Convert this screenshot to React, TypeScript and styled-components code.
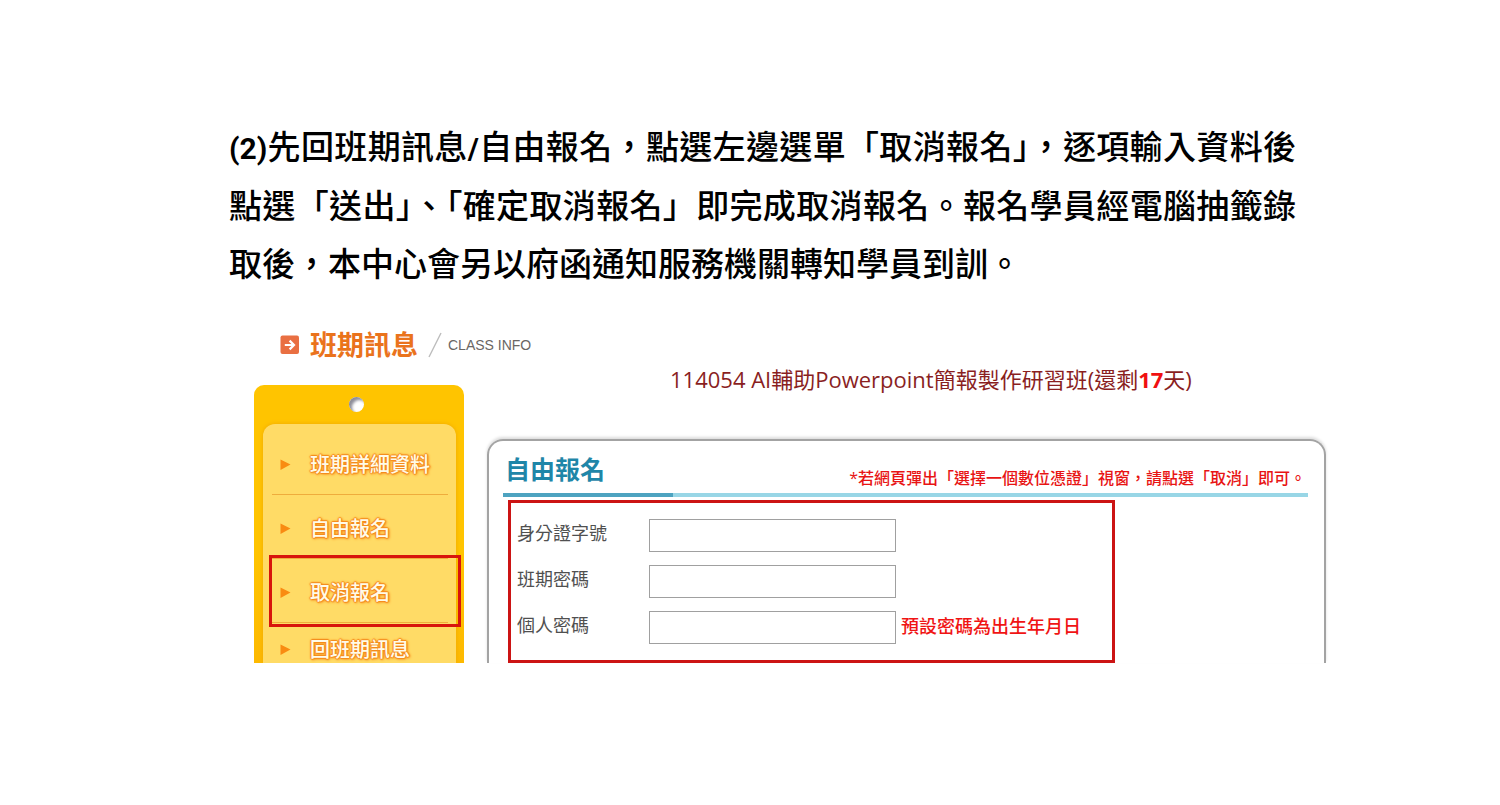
import React from "react";
import styled, { createGlobalStyle } from "styled-components";

const GlobalStyle = createGlobalStyle`
  * { box-sizing: border-box; }
  body {
    margin: 0;
    background: #fff;
    color: #000;
    font-family: "Open Sans", "Noto Sans CJK TC", sans-serif;
  }
`;

const Page = styled.main`
  padding: 119px 174px 40px 229px;
`;

const Instruction = styled.p`
  margin: 0;
  padding-right: 30px;
  font-family: Roboto, "Noto Sans CJK TC", sans-serif;
  font-size: 33px;
  font-weight: 500;
  line-height: 58px;
`;

const Line = styled.span<{ $last?: boolean }>`
  display: block;
  text-align: justify;
  text-align-last: ${(p) => (p.$last ? "left" : "justify")};
`;

const StepLabel = styled.span`
  font-weight: 700;
  font-size: 30px;
`;

const Site = styled.section`
  margin: 37px 0 0 25px;
`;

const SiteHeader = styled.header`
  display: flex;
  align-items: center;
  height: 28px;
  padding-left: 26px;
`;

const SiteTitle = styled.h1`
  margin: 0 10px;
  font-size: 27px;
  font-weight: 700;
  line-height: 28px;
  color: #ea731c;
`;

const SiteSubtitle = styled.span`
  margin-left: 6px;
  font-family: "Liberation Sans", sans-serif;
  font-size: 14px;
  line-height: 20px;
  color: #6a6664;
`;

const Columns = styled.div`
  display: flex;
  gap: 23px;
`;

const Sidebar = styled.nav`
  display: flex;
  flex-direction: column;
  flex: 0 0 210px;
  margin-top: 26px;
  padding: 12px 8px 0 9px;
  overflow: hidden;
  border-radius: 10px 10px 0 0;
  background: linear-gradient(#ffc400 60%, #fdb900);
`;

const Hole = styled.span`
  align-self: center;
  width: 15px;
  height: 15px;
  margin: 0 6px 12px 0;
  border-radius: 50%;
  background: #fff;
  box-shadow: inset 3px 3px 3px #8d8d99;
`;

const Menu = styled.ul`
  flex: 1;
  margin: 0;
  padding: 7px 8px 0 9px;
  list-style: none;
  border-radius: 12px 12px 0 0;
  background: #ffdb66;
  box-shadow: 0 0 4px #f0a800;
`;

const MenuItem = styled.li<{ $last?: boolean }>`
  position: relative;
  padding: ${(p) => (p.$last ? "15px 0 1px" : "22px 0 17px")};
  border-bottom: ${(p) => (p.$last ? "none" : "1px solid #efac3c")};
`;

const MenuLink = styled.a`
  display: flex;
  align-items: center;
  gap: 19px;
  padding-left: 8px;
  font-size: 20px;
  font-weight: 500;
  line-height: 24px;
  color: #fffbe8;
  text-decoration: none;
  text-shadow: 1px 0 1px #f58a1c, -1px 0 1px #f58a1c, 0 1px 1px #f58a1c,
    0 -1px 1px #f58a1c, 1px 1px 3px #f58a1c, 0 0 3px #f58a1c;
`;

const MenuHighlight = styled.span`
  position: absolute;
  inset: -4px -13px -5px -3px;
  border: 3px solid #d8140c;
  pointer-events: none;
`;

const Content = styled.div`
  display: flex;
  flex-direction: column;
  flex: 1;
  min-width: 0;
`;

const CourseTitle = styled.h2`
  margin: 5px 0 45px;
  padding-left: 183px;
  font-size: 22px;
  font-weight: 400;
  line-height: 30px;
  color: #8a1f1f;
`;

const DaysLeft = styled.strong`
  font-weight: 700;
  color: #f01010;
`;

const Panel = styled.div`
  flex: 1;
  padding: 14px 16px 0 14px;
  border: 2px solid #a3a3a3;
  border-bottom: none;
  border-radius: 16px 16px 0 0;
  box-shadow: 0 -2px 3px #ddd;
`;

const PanelHeader = styled.div`
  display: flex;
  justify-content: space-between;
  align-items: flex-end;
  height: 38px;
  padding: 0 2px 1px;
`;

const PanelTitle = styled.h3`
  align-self: flex-start;
  margin: 0;
  font-size: 25px;
  font-weight: 700;
  line-height: 28px;
  color: #1f86a8;
`;

const Notice = styled.p`
  margin: 0;
  font-size: 16px;
  font-weight: 500;
  line-height: 28px;
  color: #e81414;
`;

const Rule = styled.div`
  height: 4px;
  background: linear-gradient(to right, #4da3c0 170px, #98d6e6 170px);
`;

const Form = styled.form`
  display: flex;
  flex-direction: column;
  gap: 13px;
  max-width: 607px;
  margin: 3px 0 0 5px;
  padding: 16px 6px;
  border: 3px solid #cc1414;
`;

const Row = styled.div`
  display: flex;
  align-items: center;
`;

const Label = styled.label`
  width: 132px;
  padding-bottom: 5px;
  font-size: 18px;
  line-height: 28px;
  color: #505050;
`;

const Input = styled.input`
  width: 247px;
  height: 33px;
  padding: 4px 8px;
  border: 1px solid #a0a0a0;
  background: #fff;
  font-size: 18px;
`;

const Hint = styled.span`
  margin-left: 5px;
  padding-bottom: 3px;
  font-size: 18px;
  font-weight: 500;
  line-height: 28px;
  color: #f01414;
`;

const HeaderIcon = () => (
  <svg width="20" height="20" viewBox="0 0 20 20" aria-hidden="true">
    <rect x="0.5" y="0.5" width="18.5" height="18.5" rx="2" fill="#e96f42" />
    <path
      d="M4.8 10h8.7M9.6 5.6l4.4 4.4-4.4 4.4"
      fill="none"
      stroke="#fff"
      strokeWidth="2.2"
    />
  </svg>
);

const Slash = () => (
  <svg width="14" height="26" viewBox="0 0 14 26" aria-hidden="true">
    <path d="M1 25L13 1" stroke="#bdbdbd" strokeWidth="1.4" />
  </svg>
);

const Arrow = () => (
  <svg width="11" height="12" viewBox="0 0 11 12" aria-hidden="true">
    <path d="M0.5 0.5L10.5 5.5L0.5 11Z" fill="#f98b12" />
  </svg>
);

const menu = [
  { text: "班期詳細資料" },
  { text: "自由報名" },
  { text: "取消報名", marked: true },
  { text: "回班期訊息" },
];

const fields = [
  { id: "national-id", label: "身分證字號", type: "text" },
  { id: "class-code", label: "班期密碼", type: "password" },
  {
    id: "personal-code",
    label: "個人密碼",
    type: "password",
    hint: "預設密碼為出生年月日",
  },
];

export default function App() {
  return (
    <Page lang="zh-Hant">
      <GlobalStyle />
      <Instruction>
        <Line>
          <StepLabel>(2)</StepLabel>先回班期訊息<StepLabel>/</StepLabel>
          自由報名，點選左邊選單「取消報名」，逐項輸入資料後
        </Line>
        <Line>
          點選「送出」、「確定取消報名」即完成取消報名。報名學員經電腦抽籤錄
        </Line>
        <Line $last>取後，本中心會另以府函通知服務機關轉知學員到訓。</Line>
      </Instruction>

      <Site>
        <SiteHeader>
          <HeaderIcon />
          <SiteTitle>班期訊息</SiteTitle>
          <Slash />
          <SiteSubtitle>CLASS INFO</SiteSubtitle>
        </SiteHeader>

        <Columns>
          <Sidebar>
            <Hole />
            <Menu>
              {menu.map((item, i) => (
                <MenuItem key={item.text} $last={i === menu.length - 1}>
                  <MenuLink href="#">
                    <Arrow />
                    {item.text}
                  </MenuLink>
                  {item.marked && <MenuHighlight />}
                </MenuItem>
              ))}
            </Menu>
          </Sidebar>

          <Content>
            <CourseTitle>
              114054 AI輔助Powerpoint簡報製作研習班(還剩<DaysLeft>17</DaysLeft>天)
            </CourseTitle>
            <Panel>
              <PanelHeader>
                <PanelTitle>自由報名</PanelTitle>
                <Notice>
                  *若網頁彈出「選擇一個數位憑證」視窗，請點選「取消」即可。
                </Notice>
              </PanelHeader>
              <Rule />
              <Form>
                {fields.map((f) => (
                  <Row key={f.id}>
                    <Label htmlFor={f.id}>{f.label}</Label>
                    <Input id={f.id} type={f.type} />
                    {f.hint && <Hint>{f.hint}</Hint>}
                  </Row>
                ))}
              </Form>
            </Panel>
          </Content>
        </Columns>
      </Site>
    </Page>
  );
}
